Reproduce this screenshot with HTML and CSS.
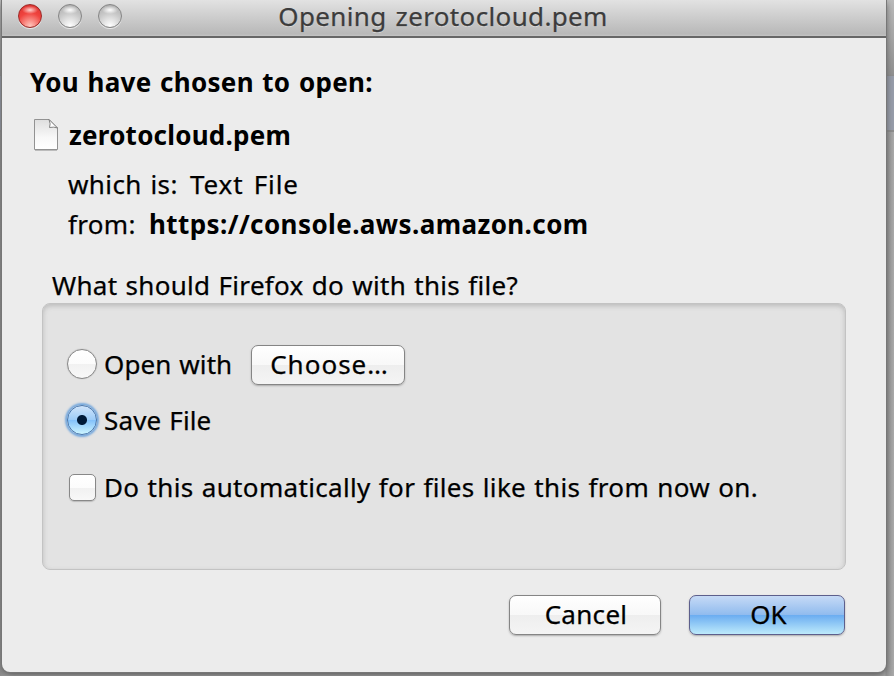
FILE: index.html
```html
<!DOCTYPE html>
<html lang="en">
<head>
<meta charset="utf-8">
<title>Opening zerotocloud.pem</title>
<link rel="stylesheet" href="styles.css">
</head>
<body>
<div class="backdrop"><div class="band"></div></div>
<main class="window">
  <header class="titlebar">
    <div class="lights"><i class="light red"></i><i class="light"></i><i class="light"></i></div>
    <h1 class="t title">Opening zerotocloud.pem</h1>
  </header>
  <section class="content">
    <h2 class="line heading"><span class="t s-head">You have chosen to open:</span></h2>
    <div class="line file">
      <svg class="doc" width="26" height="34" viewBox="0 0 26 34">
        <defs><linearGradient id="paper" x1="0" y1="0" x2="0" y2="1"><stop offset="0" stop-color="#dedede"/><stop offset=".6" stop-color="#f8f8f8"/><stop offset="1" stop-color="#fff"/></linearGradient></defs>
        <path d="M1.5 1.5H16L24.5 10V31.5H1.5Z" fill="url(#paper)" stroke="#929292"/>
        <path d="M16 1.5Q18 6 16.5 9.5Q21 8.500 24.500 10Z" fill="#fff" stroke="#777" stroke-width=".9"/>
        <path d="M2 32.500H24" stroke="#bbb"/>
      </svg>
      <strong class="t s-name">zerotocloud.pem</strong>
    </div>
    <div class="line kind"><span class="t s-which">which is:</span><span class="t s-text">Text File</span></div>
    <div class="line origin"><span class="t s-from">from:</span><strong class="t s-url">https://console.aws.amazon.com</strong></div>
    <div class="line question"><span class="t s-what">What should Firefox do with this file?</span></div>
    <div class="group">
      <div class="option open"><span class="radio"></span><span class="t s-open">Open with</span><button class="button choose"><span class="t s-choose">Choose…</span></button></div>
      <div class="option save"><span class="radio on"></span><span class="t s-save">Save File</span></div>
      <div class="option auto"><span class="check"></span><span class="t s-auto">Do this automatically for files like this from now on.</span></div>
    </div>
    <footer class="actions">
      <button class="button cancel"><span class="t s-cancel">Cancel</span></button>
      <button class="button ok"><span class="t s-ok">OK</span></button>
    </footer>
  </section>
</main>
</body>
</html>
```

FILE: styles.css
```css
* { box-sizing: border-box; }
body { margin: 0; width: 894px; height: 676px; overflow: hidden; font-family: "Noto Sans", "Open Sans", sans-serif; font-size: 26px; line-height: 40px; color: #000; background: #a5a5a5; }
h1, h2 { margin: 0; font-size: inherit; }
.t { white-space: nowrap; -webkit-text-stroke: .25px; }
.backdrop { position: absolute; inset: 0; z-index: -1; background: linear-gradient(#bcbcbc, #929292 74px, #8d8d8d 76px, transparent 76px), linear-gradient(90deg, #909090, #a8a8a8 8px, #a8a8a8 885px, #939393 886px, #aaa); }
.band { margin-top: 76px; height: 56px; background: #979daa; border-bottom: 2px solid #8d8d8d; }
.window { width: 884px; height: 672px; margin-left: 2px; background: #ececec; border-radius: 0 0 8px 8px; box-shadow: 0 0 0 1px #777, 0 3px 7px #555; overflow: hidden; }
.titlebar { height: 38px; display: grid; grid-template-columns: 122px 638px 124px; background: linear-gradient(#e2e2e2, #b8b8b8 34px, #c4c4c4); border-bottom: 2px solid #666; }
.title { font-weight: 400; color: #3c3c3c; text-align: center; line-height: 32px; height: 36px; text-shadow: 0 1px #ddd; letter-spacing: .35px; word-spacing: 2px; }
.lights { display: flex; gap: 16px; padding: 4px 0 0 16px; }
.light { width: 24px; height: 24px; border-radius: 50%; border: 1.5px solid #858585; background: radial-gradient(ellipse 8px 4px at 50% 5px, #fff, transparent), radial-gradient(circle at 50% 95%, #fff, #c9c9c9 55%, #aaa); box-shadow: 0 1px #e9e9e9; }
.red { border-color: #9c2a28; background: radial-gradient(ellipse 8px 4px at 50% 5px, #ffd4d0, transparent), radial-gradient(circle at 50% 95%, #ffc6bd, #f0443f 55%, #d9302e); }
.line { display: flex; height: 40px; }
.heading { margin: 24px 0 0 28px; font-weight: 700; }
.s-head { letter-spacing: .3px; word-spacing: 1.4px; }
.heading .t, strong.t { -webkit-text-stroke: 0; }
.file { margin: 13px 0 0 31px; }
.doc { margin: 3px 10px 0 0; }
.s-name { letter-spacing: .23px; }
.kind { margin: 9px 0 0 66px; }
.origin { margin-left: 66px; }
.s-which { width: 122px; letter-spacing: .4px; word-spacing: 1.5px; }
.s-text { letter-spacing: .9px; word-spacing: 2.5px; }
.s-from { width: 81px; letter-spacing: .3px; }
.s-url { letter-spacing: .41px; }
.question { margin: 21px 0 0 50px; height: 38px; }
.s-what { letter-spacing: .3px; word-spacing: 1.1px; }
.group { width: 804px; height: 267px; margin-left: 40px; padding: 40px 0 0 24px; border-radius: 8px; background: #e3e3e3; border: 1px solid #c3c3c3; box-shadow: inset 0 2px 5px #bbb; }
.option { display: flex; align-items: center; height: 40px; }
.radio { width: 30px; height: 30px; border-radius: 50%; border: 1.500px solid #888; background: linear-gradient(#fff, #fcfcfc 50%, #f1f1f1 50%, #f8f8f8); margin-right: 7px; box-shadow: 0 0 1px #999; }
.radio.on { background: radial-gradient(circle, #001a38 4.5px, transparent 5.5px), linear-gradient(#d0e4fa, #9cccf8 50%, #82c0fa 50%, #cdf5ff); border-color: #4776ad; box-shadow: 0 0 2px 2px #77a9dd; }
.save { margin-top: 16px; }
.auto { margin-top: 27px; }
.check { width: 27px; height: 27px; margin: 1px 8px 0 2px; border-radius: 5px; border: 1.5px solid #888; background: linear-gradient(#fff, #fcfcfc 50%, #f1f1f1 50%, #f8f8f8); box-shadow: 0 1px 1px #bbb; }
.s-open { width: 147px; letter-spacing: .1px; word-spacing: 1px; }
.s-save { letter-spacing: .15px; word-spacing: 1px; }
.s-auto { letter-spacing: .33px; word-spacing: 1.15px; }
.button { height: 40px; padding: 0 0 2px; border-radius: 7px; border: 1.5px solid #858585; font: inherit; line-height: 36px; background: linear-gradient(#fff, #f8f8f8 50%, #eee 50%, #f4f4f4); box-shadow: 0 1px 2px #aaa; color: #000; }
.choose { width: 154px; margin-top: 2px; }
.s-choose { letter-spacing: 1px; padding-left: 3px; }
.actions { display: flex; gap: 28px; margin: 25px 0 0 507px; }
.cancel { width: 152px; }
.s-cancel { letter-spacing: .3px; padding-left: 2px; }
.s-ok { padding-left: 3px; }
.ok { width: 156px; border-color: #5d5f8c; background: linear-gradient(#c6daf6, #90bbee 50%, #6aacf1 50%, #bdeafb); }
```
